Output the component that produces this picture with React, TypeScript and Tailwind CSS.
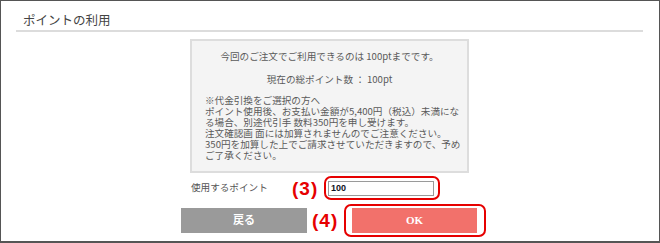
const JP = { fontFamily: '"Noto Sans CJK JP", "Noto Sans", sans-serif' };

function Annot({ n }: { n: number }) {
  return (
    <span className="font-['Liberation_Sans',sans-serif] text-[19px] font-bold leading-none tracking-[1px] text-[#e60000]">
      ({n})
    </span>
  );
}

export default function App() {
  return (
    <div
      className="h-[243px] w-[660px] overflow-hidden border-x border-t border-b-2 border-[#555] bg-white text-[#555]"
      style={JP}
    >
      {/* header */}
      <div className="ml-[15px] w-[627px] border-b-2 border-[#dcdcdc]">
        <div className="flex h-[29px] items-center pl-[7px] pt-[9px] text-[12.5px] leading-none text-[#444]">
          ポイントの利用
        </div>
      </div>

      {/* notice box */}
      <div className="ml-[189px] mt-[7px] h-[134px] w-[279px] border-2 border-[#dddddd] bg-[#f4f4f4] px-[13px] pt-[10px] text-[9.6px] leading-[11px] text-[#5a5a5a]">
        <p className="whitespace-nowrap text-center">今回のご注文でご利用できるのは 100ptまでです。</p>
        <p className="mt-[12px] whitespace-nowrap text-center">現在の総ポイント数 ： 100pt</p>
        <p className="mt-[10px] whitespace-nowrap">
          ※代金引換をご選択の方へ
          <br />
          ポイント使用後、お支払い金額が5,400円（税込）未満にな
          <br />
          る場合、別途代引手 数料350円を申し受けます。
          <br />
          注文確認画 面には加算されませんのでご注意ください。
          <br />
          350円を加算した上でご請求させていただきますので、予め
          <br />
          ご了承ください。
        </p>
      </div>

      {/* points input row */}
      <div className="mt-[3px] flex h-[24px] items-center">
        <div className="ml-[190px] w-[100px] text-[9.6px] leading-none text-[#555]">使用するポイント</div>
        <div className="flex w-[33px] justify-start pl-[1px]">
          <Annot n={3} />
        </div>
        <div className="flex h-[24px] w-[116px] items-center rounded-[7px] border-2 border-[#e60000] pl-[2px]">
          <input
            readOnly
            value="100"
            className="h-[15px] w-[106px] border border-[#9a9a9a] bg-white px-[2px] font-['Liberation_Sans',sans-serif] text-[9px] font-bold text-[#112] outline-none"
          />
        </div>
      </div>

      {/* buttons row */}
      <div className="mt-[4px] flex h-[33px] items-start">
        <button
          type="button"
          className="ml-[180px] mt-[4px] flex h-[25px] w-[126px] items-center justify-center bg-[#9a9a9a] text-[11px] font-bold text-white"
          style={{ fontFamily: '"Liberation Serif", "Noto Sans CJK JP", serif' }}
        >
          戻る
        </button>
        <div className="ml-[5px] flex h-[33px] w-[32px] items-center">
          <Annot n={4} />
        </div>
        <div className="flex h-[33px] w-[142px] items-start rounded-[7px] border-2 border-[#e60000] pl-[6px] pt-[2px]">
          <button
            type="button"
            className="flex h-[25px] w-[125px] items-center justify-center bg-[#f2716b] text-[11px] font-bold text-white"
            style={{ fontFamily: '"Liberation Serif", serif' }}
          >
            OK
          </button>
        </div>
      </div>
    </div>
  );
}
